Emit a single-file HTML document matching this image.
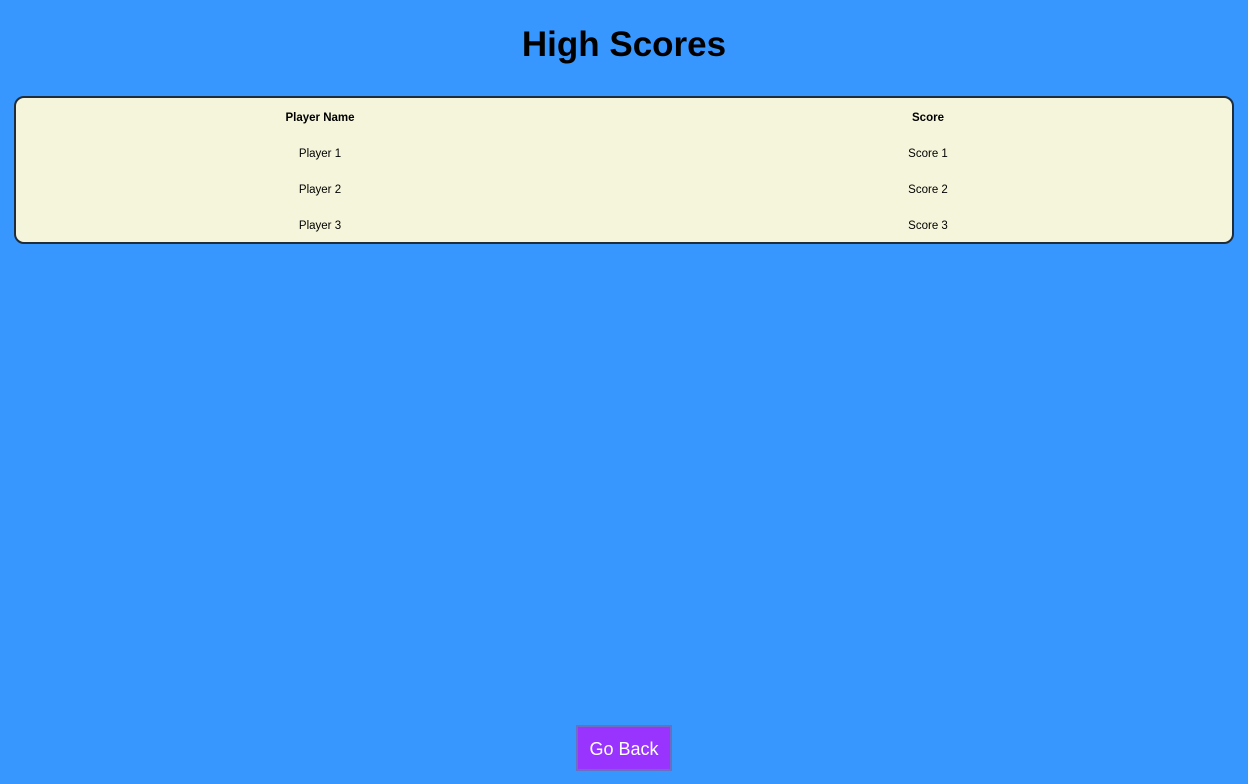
<!DOCTYPE html>
<html><head><style>
html,body{margin:0;padding:0;width:1248px;height:784px;background:#3797fe;overflow:hidden;font-family:"Segoe UI","Liberation Sans",sans-serif;}
h1{position:absolute;top:20px;left:0;width:1248px;margin:0;text-align:center;font-size:35px;font-weight:bold;line-height:50px;color:#000;}
.box{position:absolute;left:14px;top:96px;width:1216px;height:144px;border:2px solid #1f2c3a;border-radius:10px;background:#f5f5db;}
.row{position:absolute;left:0;width:1216px;height:36px;font-size:11.5px;color:#000;}
.row div{position:absolute;top:0;width:608px;text-align:center;line-height:38px;}
.row div:first-child{left:0}.row div:last-child{left:608px}
.b{font-weight:bold}
.btn{position:absolute;left:576px;top:725px;width:92px;height:42px;border:2px solid #6a6fbf;background:#9933fe;color:#fff;font-size:18px;line-height:44px;text-align:center;}
</style></head><body>
<h1>High Scores</h1>
<div class="box">
<div class="row b" style="top:1px"><div>Player Name</div><div>Score</div></div>
<div class="row" style="top:37px"><div>Player 1</div><div>Score 1</div></div>
<div class="row" style="top:73px"><div>Player 2</div><div>Score 2</div></div>
<div class="row" style="top:109px"><div>Player 3</div><div>Score 3</div></div>
</div>
<div class="btn">Go Back</div>
</body></html>
